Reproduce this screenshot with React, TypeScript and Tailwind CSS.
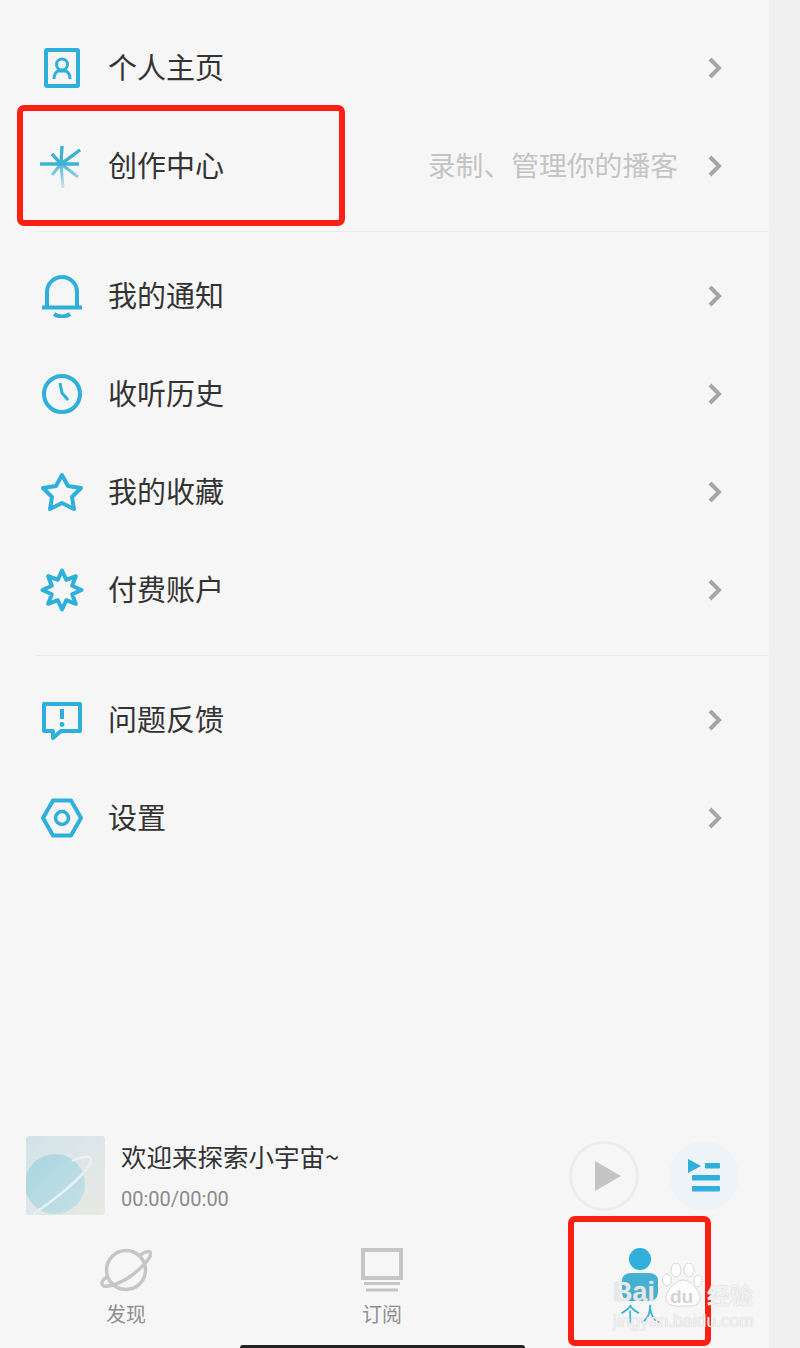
import type { ReactNode } from 'react'

const blue = '#2fafdb'

function Icon({ children }: { children: ReactNode }) {
  return (
    <svg width="44" height="44" viewBox="0 0 44 44" fill="none" stroke={blue} strokeWidth="4" className="shrink-0">
      {children}
    </svg>
  )
}

const icons = {
  profile: (
    <Icon>
      <rect x="6" y="4" width="32" height="36" rx="1" />
      <circle cx="22" cy="18.5" r="5.5" strokeWidth="3" />
      <path d="M14 33c0-6 3-8 5-8h6c2 0 5 2 5 8" strokeWidth="3" />
    </Icon>
  ),
  spark: (
    <svg width="44" height="44" viewBox="0 0 44 44" fill="none" strokeWidth="3" className="shrink-0">
      <defs>
        <linearGradient id="sparkFade" gradientUnits="userSpaceOnUse" x1="0" y1="18" x2="0" y2="44">
          <stop offset="0" stopColor="#3fb2d4" />
          <stop offset="1" stopColor="#cfe6ee" />
        </linearGradient>
      </defs>
      <path
        d="M0 20H39M22 2L21 20L23 44M40 6L21 20L38 33M12 10L21 20L12 31"
        stroke="url(#sparkFade)"
      />
      <path d="M0 20H39M22 2L21 20M40 6L21 20M12 10L21 20" stroke="#3fb2d4" />
    </svg>
  ),
  bell: (
    <Icon>
      <path d="M7 33V18a15 15 0 0 1 30 0V33" />
      <path d="M2 33.500H42" />
      <path d="M14 40q8 5 16 0" />
    </Icon>
  ),
  clock: (
    <Icon>
      <circle cx="22" cy="22" r="18" />
      <path d="M20 11L22 21L28 28" strokeWidth="3" />
    </Icon>
  ),
  star: (
    <Icon>
      <polygon points="22,5 28,16 41,18 32,27 34,39 22,33 10,39 12,27 3,18 16,16" strokeLinejoin="round" />
    </Icon>
  ),
  badge: (
    <Icon>
      <polygon
        points="22,2.500 26.200,11.800 35.800,8.200 32.200,17.800 41.500,22 32.200,26.200 35.800,35.800 26.200,32.200 22,41.500 17.800,32.200 8.200,35.800 11.800,26.200 2.500,22 11.800,17.800 8.200,8.200 17.800,11.800"
        strokeLinejoin="round"
      />
    </Icon>
  ),
  feedback: (
    <Icon>
      <path d="M4 6H40V33H21L13 40V33H4Z" strokeLinejoin="round" />
      <path d="M22 11V21" />
      <circle cx="22" cy="26.500" r="2.400" fill={blue} stroke="none" />
    </Icon>
  ),
  settings: (
    <Icon>
      <polygon points="3,22 13,4.500 31,4.500 41,22 31,39.500 13,39.500" strokeLinejoin="round" />
      <circle cx="22" cy="22" r="6.500" strokeWidth="3.500" />
    </Icon>
  ),
}

function Row({ icon, label, hint }: { icon: ReactNode; label: string; hint?: string }) {
  return (
    <div className="flex h-[98px] items-center pl-[40px] pr-[47px]">
      {icon}
      <span className="ml-[24px] pb-[4px] text-[29px] leading-none text-[#333333]">{label}</span>
      {hint && <span className="ml-auto pb-[2px] text-[27.800px] leading-none text-[#c4c4c4]">{hint}</span>}
      <svg
        width="14"
        height="22"
        viewBox="0 0 14 22"
        fill="none"
        stroke="#a6a6a6"
        strokeWidth="4"
        className={hint ? 'ml-[30px] shrink-0' : 'ml-auto shrink-0'}
      >
        <path d="M2 2L11 11L2 20" />
      </svg>
    </div>
  )
}

function Divider() {
  return <div className="mb-[15px] ml-[37px] mt-[16px] h-px bg-[#ebebeb]" />
}

function Tab({ icon, label, active, className }: { icon: ReactNode; label: string; active?: boolean; className: string }) {
  return (
    <div className={`flex flex-col items-center ${className}`}>
      <div className="flex h-[46px] items-center">{icon}</div>
      <span className={`mt-[11px] text-[20px] leading-none ${active ? 'text-[#2fafdb]' : 'text-[#8e8e8e]'}`}>{label}</span>
    </div>
  )
}

export default function App() {
  return (
    <div
      className="relative flex h-[1348px] w-[800px] overflow-hidden bg-[#f0f0f0]"
      style={{ fontFamily: '"Noto Sans CJK SC", Roboto, sans-serif' }}
    >
      <main className="flex w-[769px] flex-col bg-[#f6f6f6] pt-[19px]">
        <Row icon={icons.profile} label="个人主页" />
        <Row icon={icons.spark} label="创作中心" hint="录制、管理你的播客" />
        <Divider />
        <Row icon={icons.bell} label="我的通知" />
        <Row icon={icons.clock} label="收听历史" />
        <Row icon={icons.star} label="我的收藏" />
        <Row icon={icons.badge} label="付费账户" />
        <Divider />
        <Row icon={icons.feedback} label="问题反馈" />
        <Row icon={icons.settings} label="设置" />

        <section className="mt-auto flex h-[79px] items-center pl-[26px] pr-[30px]">
          <div className="h-[79px] w-[79px] shrink-0 overflow-hidden rounded-[3px] bg-gradient-to-br from-[#d3e3ea] to-[#e9e9e4]">
            <svg width="79" height="79" viewBox="0 0 79 79" fill="none">
              <defs>
                <linearGradient id="planetFade" x1="0" y1="0" x2="1" y2="1">
                  <stop offset="0" stopColor="#a8d6e2" />
                  <stop offset="1" stopColor="#c6e0e4" />
                </linearGradient>
              </defs>
              <circle cx="29" cy="48" r="30" fill="url(#planetFade)" />
              <path d="M7 78C26 66 48 48 60 34C66 26 67 20 60 21C56 21 50 23 46 25" stroke="#e6f1f3" strokeWidth="2.500" />
            </svg>
          </div>
          <div className="ml-[16px] flex flex-col">
            <span className="text-[25.500px] leading-[30px] text-[#333333]">欢迎来探索小宇宙~</span>
            <span className="mt-[16px] text-[20px] leading-[24px] text-[#8a8a8a]" style={{ fontFamily: 'Roboto, sans-serif' }}>
              00:00/00:00
            </span>
          </div>
          <div className="ml-auto flex h-[70px] w-[70px] items-center justify-center rounded-full border-[3px] border-[#ececec]">
            <svg width="28" height="30" viewBox="0 0 28 30" className="ml-[8px]">
              <polygon points="1,0 27,15 1,30" fill="#c4c4c4" />
            </svg>
          </div>
          <div className="ml-[30px] flex h-[70px] w-[70px] items-center justify-center rounded-full bg-[#eef3f7]">
            <svg width="34" height="34" viewBox="0 0 34 34" fill={blue}>
              <polygon points="1,0 14,7 1,14" />
              <rect x="18" y="4" width="15" height="5.500" rx="1" />
              <rect x="5" y="16" width="28" height="5.500" rx="1" />
              <rect x="5" y="27" width="28" height="5.500" rx="1" />
            </svg>
          </div>
        </section>

        <nav className="flex h-[133px] gap-[2px] pt-[32px]">
          <Tab
            className="w-[252px]"
            label="发现"
            icon={
              <svg width="52" height="46" viewBox="0 0 52 46" fill="none" stroke="#c6c6c6" strokeWidth="3.500">
                <circle cx="26" cy="23" r="19.500" />
                <path d="M40 8C46 4 52 3 50.500 8C49 14 38 24 28 31C16 38 3 42 2 37C1.500 34 5 31 9 29" />
              </svg>
            }
          />
          <Tab
            className="w-[256px]"
            label="订阅"
            icon={
              <svg width="42" height="44" viewBox="0 0 42 44" fill="none" stroke="#c6c6c6">
                <rect x="2" y="2" width="38" height="28" strokeWidth="4" />
                <path d="M3 35.500H39" strokeWidth="3" />
                <path d="M5 42H37" strokeWidth="3" />
              </svg>
            }
          />
          <Tab
            className="w-[256px]"
            label="个人"
            active
            icon={
              <svg width="40" height="54" viewBox="0 0 40 54" className="mt-[9px]">
                <circle cx="20" cy="11" r="11" fill={blue} />
                <path d="M2 32C2 28 6 25 11 25H29C34 25 38 28 38 32V44C38 50 34 53 29 53H11C6 53 2 50 2 44Z" fill="#45b1d2" />
              </svg>
            }
          />
        </nav>
      </main>

      {/* annotations baked into the screenshot */}
      <div className="absolute left-[17px] top-[105px] h-[121px] w-[328px] rounded-[7px] border-[6px] border-[#fb2012]" />
      <div className="absolute left-[568px] top-[1216px] h-[130px] w-[143px] rounded-[7px] border-[6px] border-[#fb2012]" />

      {/* baidu watermark */}
      <span
        className="absolute left-[613px] top-[1279px] text-[27px] font-bold leading-none text-white/70 [text-shadow:0_0_1px_#b5b5b5]"
        style={{ fontFamily: '"Liberation Sans", sans-serif' }}
      >
        Bai
      </span>
      <svg
        width="44"
        height="44"
        viewBox="0 0 44 44"
        fill="#ffffff"
        fillOpacity="0.8"
        stroke="#cfcfcf"
        strokeWidth="0.800"
        className="absolute left-[661px] top-[1263px]"
      >
        <ellipse cx="6" cy="17" rx="4.500" ry="6" />
        <ellipse cx="15" cy="7" rx="5" ry="7" />
        <ellipse cx="28" cy="7" rx="5" ry="7" />
        <ellipse cx="37" cy="18" rx="4" ry="6" />
        <path d="M22 17C30 17 41 30 39 37C37 44 28 43 22 43C16 43 7 44 5 37C3 30 14 17 22 17Z" />
      </svg>
      <span
        className="absolute left-[670px] top-[1287px] text-[19px] font-bold leading-none text-[#d4d4d4]"
        style={{ fontFamily: '"Liberation Sans", sans-serif' }}
      >
        du
      </span>
      <span className="absolute left-[707px] top-[1283px] text-[23px] font-bold leading-none text-white/80 [text-shadow:0_0_1px_#b5b5b5]">
        经验
      </span>
      <span
        className="absolute left-[613px] top-[1313px] text-[17.500px] leading-none text-white/80 [text-shadow:0_0_1px_#b5b5b5]"
        style={{ fontFamily: '"Liberation Sans", sans-serif' }}
      >
        jingyan.baidu.com
      </span>

      <div className="absolute bottom-0 left-[240px] h-[3px] w-[285px] rounded-t-[3px] bg-[#222222]" />
    </div>
  )
}
